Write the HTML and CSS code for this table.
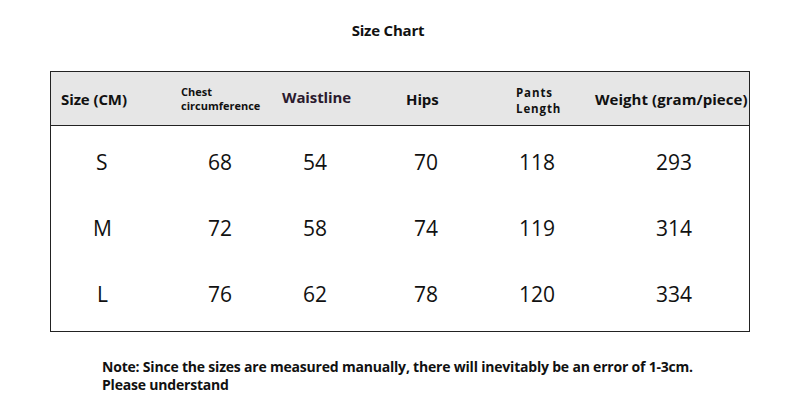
FILE: index.html
```html
<!DOCTYPE html>
<html>
<head>
<meta charset="utf-8">
<link rel="stylesheet" href="styles.css">
</head>
<body>
<div class="page">
  <h1 class="title">Size Chart</h1>
  <div class="table">
    <div class="head">
      <div class="hc h-size">Size (CM)</div>
      <div class="hc h-small">Chest<br>circumference</div>
      <div class="hc h-waist">Waistline</div>
      <div class="hc h-hips">Hips</div>
      <div class="hc h-pants">Pants<br>Length</div>
      <div class="hc h-weight">Weight (gram/piece)</div>
    </div>
    <div class="body">
      <div class="row"><span>S</span><span>68</span><span>54</span><span>70</span><span>118</span><span>293</span></div>
      <div class="row"><span class="m">M</span><span>72</span><span>58</span><span>74</span><span>119</span><span>314</span></div>
      <div class="row"><span class="l">L</span><span>76</span><span>62</span><span>78</span><span>120</span><span>334</span></div>
    </div>
  </div>
  <p class="note">Note: Since the sizes are measured manually, there will inevitably be an error of 1-3cm.<br>Please understand</p>
</div>
</body>
</html>
```

FILE: styles.css
```css
html, body {
  margin: 0;
  padding: 0;
  background: #ffffff;
}
.page {
  width: 800px;
  height: 417px;
  font-family: "Open Sans", "Noto Sans", sans-serif;
  color: #111;
}
.title {
  margin: 0;
  padding-top: 20px;
  height: 20px;
  line-height: 20px;
  font-size: 15px;
  font-weight: 700;
  text-align: center;
  width: 776px;
  letter-spacing: -0.2px;
}
.table {
  margin: 31px 0 0 50px;
  width: 698px;
  border: 1px solid #222;
}
.head {
  display: grid;
  grid-template-columns: 120px 101px 124px 110px 80px 1fr;
  height: 53px;
  align-items: center;
  background: #e6e6e6;
  border-bottom: 1px solid #222;
  font-weight: 700;
}
.hc {
  padding-left: 10px;
  font-size: 15px;
  letter-spacing: -0.1px;
  white-space: nowrap;
}
.h-size { padding-top: 1px; }
.h-small {
  font-size: 11px;
  line-height: 14px;
  letter-spacing: 0;
}
.h-waist {
  font-size: 15px;
  color: #2b1a2e;
  margin-top: -4px;
}
.h-hips {
  font-size: 15px;
}
.h-pants {
  font-size: 11.5px;
  line-height: 16px;
  letter-spacing: 0.9px;
  padding-top: 4px;
}
.h-weight {
  padding-left: 9px;
  font-size: 15px;
  letter-spacing: 0.05px;
}
.body {
  padding: 3px 0 4px 0;
}
.row {
  display: grid;
  grid-template-columns: 112px 95px 111px 105px 137px 1fr;
  height: 66px;
  align-items: center;
  padding-left: 45px;
  font-size: 21px;
  color: #111;
}
.row span.m { margin-left: -3px; }
.row span.l { margin-left: 1px; }
.note {
  margin: 26px 0 0 102px;
  font-size: 14px;
  line-height: 17.5px;
  font-weight: 700;
  letter-spacing: -0.2px;
}
```
